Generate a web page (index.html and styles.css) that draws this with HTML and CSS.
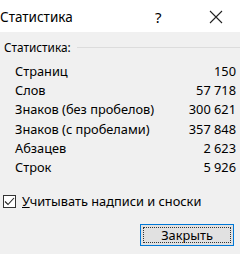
FILE: index.html
```html
<!DOCTYPE html>
<html lang="ru">
<head>
  <meta charset="UTF-8" />
  <title>Статистика</title>
  <link rel="stylesheet" href="styles.css">
</head>
<body>
  <div class="dialog">
    <div class="titlebar">
      <span class="title">Статистика</span>
      <span class="help">?</span>
      <span class="close">
        <svg width="14" height="14" viewBox="0 0 14 14">
          <path d="M1 1 L13 13 M13 1 L1 13" stroke="#222" stroke-width="1.1" fill="none"/>
        </svg>
      </span>
    </div>

    <div class="content">
      <div class="group-title">
        <span>Статистика:</span>
        <div class="group-line"></div>
      </div>

      <div class="stats">
        <div class="stat-row"><span>Страниц</span><span>150</span></div>
        <div class="stat-row"><span>Слов</span><span>57 718</span></div>
        <div class="stat-row"><span>Знаков (без пробелов)</span><span>300 621</span></div>
        <div class="stat-row"><span>Знаков (с пробелами)</span><span>357 848</span></div>
        <div class="stat-row"><span>Абзацев</span><span>2 623</span></div>
        <div class="stat-row"><span>Строк</span><span>5 926</span></div>
      </div>

      <label class="check-row">
        <span class="checkbox">
          <svg width="11" height="11" viewBox="0 0 11 11">
            <path d="M1 5.5 L4 8.5 L10 2" stroke="#222" stroke-width="1.1" fill="none"/>
          </svg>
        </span>
        <span><u>У</u>читывать надписи и сноски</span>
      </label>

      <div class="actions">
        <button class="close-btn"><span class="focus">Закрыть</span></button>
      </div>
    </div>
  </div>
</body>
</html>
```

FILE: styles.css
```css
* {
  box-sizing: border-box;
}

body {
  margin: 0;
  font-family: "Noto Sans", "Open Sans", sans-serif;
  font-size: 12.8px;
  color: #000;
  background: #f0f0f0;
}

.dialog {
  width: 240px;
  height: 254px;
  overflow: hidden;
}

.titlebar {
  height: 32px;
  background: #fff;
  display: flex;
  align-items: center;
  padding-top: 2px;
}

.title {
  font-size: 13.5px;
  flex-grow: 1;
}

.help {
  font-size: 15px;
  width: 54px;
  text-align: left;
}

.close {
  display: flex;
  width: 31px;
}

.content {
  padding: 6px 4px 0 4px;
}

.group-title {
  display: flex;
  align-items: center;
  height: 18px;
  font-size: 11.8px;
}

.group-line {
  flex-grow: 1;
  height: 1px;
  background: #dcdcdc;
  margin-left: 6px;
  margin-right: -4px;
}

.stats {
  padding: 6px 0 0 11px;
}

.stat-row {
  display: flex;
  justify-content: space-between;
  height: 19.2px;
  line-height: 19.2px;
}

.check-row {
  display: flex;
  align-items: center;
  gap: 6px;
  margin-top: 15px;
  margin-left: -1px;
}

.checkbox {
  width: 13px;
  height: 13px;
  border: 1px solid #333;
  background: #fff;
  display: flex;
  align-items: center;
  justify-content: center;
}

.actions {
  display: flex;
  justify-content: flex-end;
  margin-top: 14px;
  padding-right: 2px;
}

.close-btn {
  width: 94px;
  height: 22px;
  padding: 2px;
  border: 1px solid #0078d7;
  background: #e1e1e1;
  font-family: inherit;
  font-size: 12.8px;
  display: flex;
}

.focus {
  flex-grow: 1;
  border: 1px dotted #333;
  display: flex;
  align-items: center;
  justify-content: center;
}
```
